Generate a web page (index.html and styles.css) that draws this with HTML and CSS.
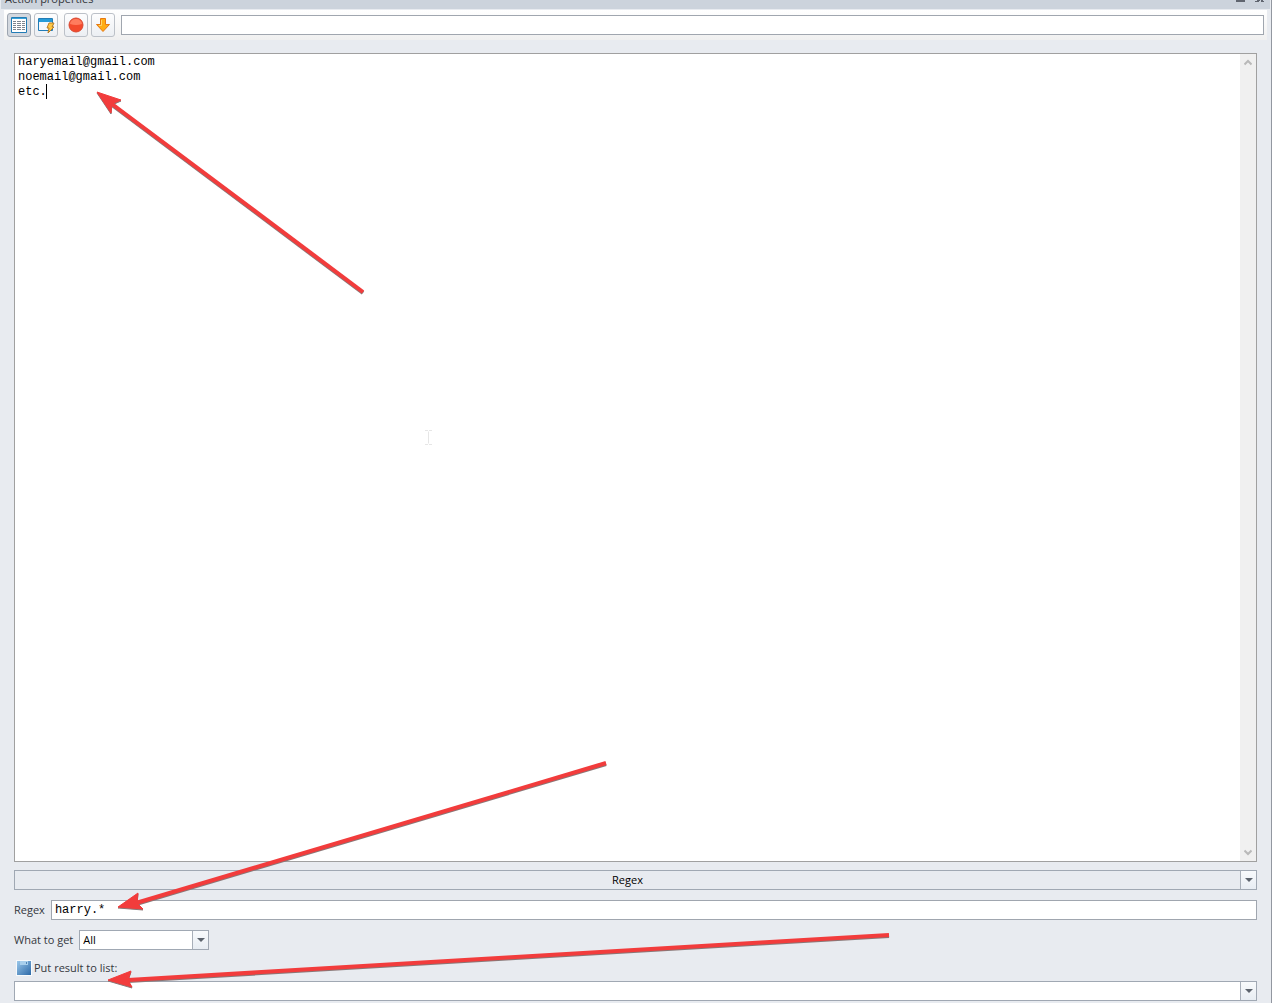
FILE: index.html
```html
<!DOCTYPE html>
<html lang="en">
<head>
<meta charset="utf-8">
<title>Action properties</title>
<link rel="stylesheet" href="styles.css">
</head>
<body>
<main class="panel">
  <header class="titlebar">
    <h1 class="title">Action properties</h1>
    <svg class="window-marks" width="30" height="3" viewBox="0 0 30 3" aria-hidden="true"><path d="M0 0h9v2H0zM21 0h3v1h-1v1h-4v-1h2zM25 0h2v1h1v1h-3z" fill="#60656f"/></svg>
  </header>
  <div class="toolbar">
    <button class="tool pressed" type="button" aria-label="Properties">
      <svg width="16" height="16" viewBox="0 0 16 16"><path d="M.5.5h15v15H.5z" fill="#fff" stroke="#237cb5"/><path d="M1 1h14v1H1z" fill="#39a1d8"/><path d="M2 4.500h3m1 0h4m1 0h3M2 6.500h3m1 0h4m1 0h3M2 8.500h3m1 0h4m1 0h3M2 10.500h3m1 0h4m1 0h3M2 12.500h3m1 0h4m1 0h3" stroke="#7c858f"/></svg>
    </button>
    <button class="tool" type="button" aria-label="Run action">
      <svg width="17" height="17" viewBox="0 0 17 17"><path d="M.5 1.500h14v12H.5z" fill="#f4f8fc" stroke="#237cb5"/><path d="M1 2h13v3H1z" fill="#259bd8"/><path d="M11 6h5l-2 4h2l-6 6 1-5H9z" fill="#ffc742" stroke="#b77c27"/></svg>
    </button>
    <button class="tool group-start" type="button" aria-label="Record">
      <svg width="16" height="16" viewBox="0 0 16 16"><circle cx="8" cy="8" r="7" fill="#f34a2c" stroke="#d94931"/><path d="M2 7a6 5 0 0 1 12 0q-6 2-12 0" fill="#ff7c5e"/></svg>
    </button>
    <button class="tool" type="button" aria-label="Move down">
      <svg width="16" height="16" viewBox="0 0 16 16"><path d="M5.500 1.500h5v6h4L8 14.500 1.500 7.500h4z" fill="#ffac14" stroke="#e77812"/><path d="M6.500 3v5.500H4" fill="none" stroke="#ffd568"/></svg>
    </button>
    <input class="field comment" type="text" aria-label="Comment">
  </div>
  <form class="content">
    <div class="editor">
      <textarea class="source" aria-label="Text" spellcheck="false">haryemail@gmail.com
noemail@gmail.com
etc.</textarea>
      <div class="scrollbar" aria-hidden="true">
        <svg width="8" height="7" viewBox="0 0 8 7"><path d="M.5 5.500 4 2l3.500 3.500" fill="none" stroke="#b9b9b9" stroke-width="2"/></svg>
        <svg width="8" height="7" viewBox="0 0 8 7"><path d="M.5 1.500 4 5l3.500-3.500" fill="none" stroke="#b9b9b9" stroke-width="2"/></svg>
      </div>
      <span class="caret"></span>
    </div>
    <div class="combo mode">
      <select aria-label="Mode"><option>Regex</option></select>
      <span class="drop"></span>
    </div>
    <div class="row">
      <label for="regex">Regex</label>
      <input class="field regex" id="regex" type="text" value="harry.*">
    </div>
    <div class="row">
      <label for="get">What to get</label>
      <div class="combo short">
        <select id="get"><option>All</option></select>
        <span class="drop"></span>
      </div>
    </div>
    <label class="result-label" for="result">
      <svg width="16" height="16" viewBox="0 0 16 16"><defs><linearGradient id="disk" x2="1" y2="1"><stop stop-color="#9bc8eb"/><stop offset="1" stop-color="#2c69a7"/></linearGradient></defs><path d="M0 0h16v16H0z" fill="#f7fafc"/><path d="M1 1h14v14H1z" fill="url(#disk)"/><path d="M4 1h8v4H4z" fill="#a9d0ed"/><path d="M10 2h1v2h-1z" fill="#4f85b5"/></svg>
      Put result to list:
    </label>
    <div class="combo">
      <select id="result"><option></option></select>
      <span class="drop"></span>
    </div>
  </form>
  <svg class="annotations" width="1272" height="1003" viewBox="0 0 1272 1003" aria-hidden="true">
    <g class="arrow">
      <path d="M363 292 112 104"/><path class="head" d="m97 92 24 8-9 4-1 9z"/>
      <path d="M606 763 136 903"/><path class="head" d="m118 907 20-14-1 10 6 6z"/>
      <path d="M889 935 128 980"/><path class="head" d="m108 980 23-9-3 9 4 7z"/>
    </g>
    <path d="M425 430.500h3m1 0h3m-3.500 1v12m-3.500 1h3m1 0h3" stroke="#e6e6e6" fill="none"/>
  </svg>
</main>
</body>
</html>
```
FILE: styles.css
```css
* { box-sizing: border-box; }
body {
  margin: 0;
  font: 11px/16px "Open Sans", sans-serif;
  color: #34373d;
}
.panel {
  position: relative;
  display: flex;
  flex-direction: column;
  height: 100vh;
  overflow: hidden;
  background: #e8ebf0;
  border-right: 1px solid #9297a0;
}
.titlebar {
  display: flex;
  justify-content: space-between;
  align-items: flex-start;
  height: 9px;
  margin: 0 1px;
  padding: 0 4px;
  background: #ccd3dc;
}
.title { margin: -9px 0 0; font-size: 11px; line-height: 16px; font-weight: 400; }
.toolbar {
  display: flex;
  align-items: center;
  gap: 3px;
  height: 30px;
  margin: 1px 4px 0;
  padding: 0 3px;
  background: linear-gradient(#fff, #f0f0f0);
}
.tool {
  display: flex;
  align-items: center;
  justify-content: center;
  width: 24px;
  height: 24px;
  padding: 0;
  border: 1px solid #bcc1c8;
  border-radius: 3px;
  background: linear-gradient(#fdfdfe, #eceff3);
}
.pressed { background: #d3d8df; border-color: #9da5b0; }
.group-start { margin-left: 3px; }
.field {
  flex: 1;
  min-width: 0;
  height: 20px;
  padding: 0 3px;
  border: 1px solid #a0a6af;
  background: #fff;
  outline: 0;
}
.comment { margin-left: 3px; }
.content {
  flex: 1;
  display: flex;
  flex-direction: column;
  min-height: 0;
  padding: 13px 14px 2px;
}
.editor {
  position: relative;
  flex: 1;
  display: flex;
  min-height: 0;
  border: 1px solid #a0a0a0;
  background: #fff;
}
.source, .regex {
  font: 12px/15px "Liberation Mono", monospace;
  color: #000;
}
.source {
  flex: 1;
  padding: 1px 3px;
  border: 0;
  outline: 0;
  resize: none;
  background: transparent;
}
.scrollbar {
  display: flex;
  flex-direction: column;
  align-items: center;
  justify-content: space-between;
  width: 16px;
  padding: 5px 1px 5px 0;
  background: #f0f0f0;
}
.caret {
  position: absolute;
  left: 31px;
  top: 30px;
  width: 1px;
  height: 15px;
  background: #000;
}
.combo {
  display: flex;
  height: 20px;
  border: 1px solid #a0a8b3;
  background: #fff;
}
.combo select {
  flex: 1;
  min-width: 0;
  padding: 0 3px;
  appearance: none;
  border: 0;
  outline: 0;
  background: transparent;
  color: #000;
  font: inherit;
}
.drop {
  display: flex;
  align-items: center;
  justify-content: center;
  width: 16px;
  border-left: 1px solid #a8afb9;
  background: linear-gradient(#f8fafc, #e8edf3);
}
.drop::before {
  content: "";
  border: 4px solid transparent;
  border-top-color: #5c636d;
  border-bottom: 0;
}
.mode { margin-top: 8px; background: #e8ebf0; }
.mode select { text-align-last: center; }
.row {
  display: flex;
  align-items: center;
  gap: 6px;
  margin-top: 10px;
}
.short { width: 130px; }
.result-label {
  display: flex;
  align-items: center;
  gap: 2px;
  height: 16px;
  margin: 10px 0 5px 2px;
}
.annotations { position: absolute; left: 0; top: 0; pointer-events: none; }
.arrow { fill: none; stroke: #f23c3c; stroke-width: 4; filter: drop-shadow(0 1px 0 #8a7777); }
.head { fill: #f23c3c; stroke-width: 1; }
```
